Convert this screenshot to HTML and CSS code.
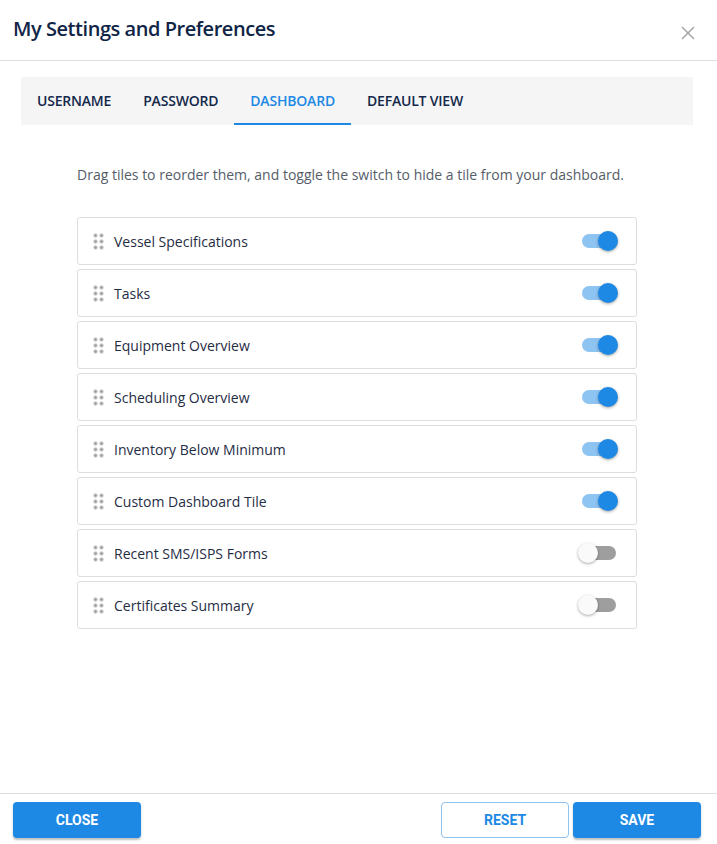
FILE: index.html
```html
<!DOCTYPE html>
<html lang="en">
<head>
    <meta charset="UTF-8">
    <meta name="viewport" content="width=device-width, initial-scale=1.0">
    <title>My Settings and Preferences</title>
    <link rel="stylesheet" href="styles.css">
</head>
<body>
    <div class="dialog">
        <div class="dialog-header">
            <h1>My Settings and Preferences</h1>
            <button class="close-x" aria-label="Close">
                <svg width="14" height="14" viewBox="0 0 14 14"><path d="M1 1L13 13M13 1L1 13" stroke="#a8a8a8" stroke-width="1.6" fill="none"/></svg>
            </button>
        </div>

        <div class="dialog-body">
            <div class="tabs">
                <div class="tab">USERNAME</div>
                <div class="tab">PASSWORD</div>
                <div class="tab active">DASHBOARD</div>
                <div class="tab">DEFAULT VIEW</div>
            </div>

            <p class="hint">Drag tiles to reorder them, and toggle the switch to hide a tile from your dashboard.</p>

            <ul class="tile-list">
                <li class="tile"><span class="handle"></span><span class="tile-name">Vessel Specifications</span><span class="switch on"></span></li>
                <li class="tile"><span class="handle"></span><span class="tile-name">Tasks</span><span class="switch on"></span></li>
                <li class="tile"><span class="handle"></span><span class="tile-name">Equipment Overview</span><span class="switch on"></span></li>
                <li class="tile"><span class="handle"></span><span class="tile-name">Scheduling Overview</span><span class="switch on"></span></li>
                <li class="tile"><span class="handle"></span><span class="tile-name">Inventory Below Minimum</span><span class="switch on"></span></li>
                <li class="tile"><span class="handle"></span><span class="tile-name">Custom Dashboard Tile</span><span class="switch on"></span></li>
                <li class="tile"><span class="handle"></span><span class="tile-name">Recent SMS/ISPS Forms</span><span class="switch"></span></li>
                <li class="tile"><span class="handle"></span><span class="tile-name">Certificates Summary</span><span class="switch"></span></li>
            </ul>
        </div>

        <div class="dialog-footer">
            <button class="btn btn-primary">CLOSE</button>
            <div class="footer-right">
                <button class="btn btn-outline">RESET</button>
                <button class="btn btn-primary">SAVE</button>
            </div>
        </div>
    </div>
</body>
</html>
```

FILE: styles.css
```css
html, body {
    margin: 0;
    height: 100%;
}

body {
    font-family: "Open Sans", sans-serif;
    color: #1c2b44;
    background: #fff;
}

.dialog {
    display: flex;
    flex-direction: column;
    height: 844px;
}

.dialog-header {
    display: flex;
    align-items: center;
    justify-content: space-between;
    height: 61px;
    padding: 0 22px 0 13px;
    border-bottom: 1px solid #dedede;
    box-sizing: border-box;
}

.dialog-header h1 {
    margin: 0;
    font-size: 20px;
    font-weight: 600;
    letter-spacing: -0.45px;
    color: #102446;
    position: relative;
    top: -2px;
}

.close-x {
    border: none;
    background: none;
    padding: 0;
    display: flex;
    position: relative;
    top: 3px;
}

.dialog-body {
    flex: 1;
    padding: 16px 24px 0 21px;
}

.tabs {
    display: flex;
    height: 48px;
    background: #f5f5f5;
}

.tab {
    display: flex;
    align-items: center;
    padding: 0 16px;
    font-size: 14px;
    font-weight: 600;
    letter-spacing: -0.2px;
    color: #13284a;
    box-sizing: border-box;
    border-bottom: 2px solid transparent;
}

.tab.active {
    color: #1e88e5;
    border-bottom-color: #1e88e5;
}

.hint {
    margin: 40px 0 33px 56px;
    font-size: 14px;
    color: #555d69;
}

.tile-list {
    list-style: none;
    margin: 0 0 0 56px;
    padding: 0;
    width: 560px;
    display: flex;
    flex-direction: column;
    gap: 4px;
}

.tile {
    display: flex;
    align-items: center;
    height: 48px;
    box-sizing: border-box;
    border: 1px solid #dedede;
    border-radius: 3px;
    padding: 0 20px 0 15px;
}

.handle {
    width: 11px;
    height: 17px;
    margin-right: 10px;
    background-image: radial-gradient(circle, #a0a0a0 1.5px, transparent 1.9px);
    background-size: 6px 6px;
    background-position: -0.5px -0.5px;
}

.tile-name {
    flex: 1;
    font-size: 14px;
    color: #1f2d45;
}

.switch {
    position: relative;
    width: 34px;
    height: 14px;
    border-radius: 7px;
    background: #9e9e9e;
}

.switch::after {
    content: "";
    position: absolute;
    top: -3px;
    left: -4px;
    width: 20px;
    height: 20px;
    border-radius: 50%;
    background: #fafafa;
    box-shadow: 0 1px 3px rgba(0, 0, 0, 0.35);
}

.switch.on {
    background: #8ec4f2;
}

.switch.on::after {
    left: 16px;
    background: #1e88e5;
}

.dialog-footer {
    display: flex;
    justify-content: space-between;
    align-items: flex-start;
    height: 51px;
    box-sizing: border-box;
    padding: 8px 16px 0 13px;
    border-top: 1px solid #dedede;
}

.footer-right {
    display: flex;
    gap: 4px;
}

.btn {
    width: 128px;
    height: 36px;
    border-radius: 4px;
    font-family: Roboto, sans-serif;
    font-weight: 700;
    font-size: 14px;
    cursor: pointer;
}

.btn-primary {
    background: #1e88e5;
    color: #fff;
    border: none;
    box-shadow: 0 2px 2px rgba(0, 0, 0, 0.25);
}

.btn-outline {
    background: #fff;
    color: #1e88e5;
    border: 1px solid #90c2ee;
}
```
